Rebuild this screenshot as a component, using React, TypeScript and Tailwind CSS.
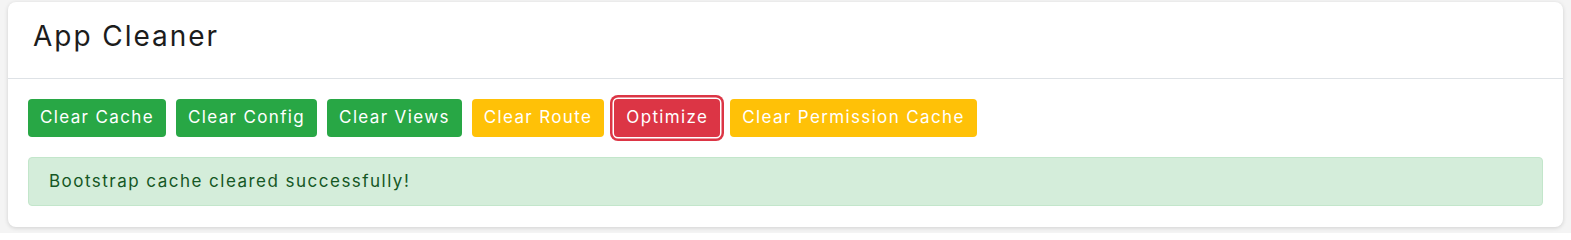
const buttons = [
  { label: "Clear Cache", tone: "green" },
  { label: "Clear Config", tone: "green" },
  { label: "Clear Views", tone: "green" },
  { label: "Clear Route", tone: "yellow" },
  { label: "Optimize", tone: "red" },
  { label: "Clear Permission Cache", tone: "yellow" },
];

const toneClass: Record<string, string> = {
  green: "bg-[#28a745]",
  yellow: "bg-[#ffc107]",
  red: "bg-[#dc3545] ring-[2.5px] ring-[#dc3545] ring-offset-[1.5px] ring-offset-white",
};

export default function App() {
  return (
    <div className="min-h-[233px] bg-[#f4f4f4] px-2 pt-[2px] pb-[6px] font-['Inter',sans-serif]">
      <div className="rounded-lg bg-white shadow-[0_1px_4px_rgba(0,0,0,0.15)]">
        <div className="h-[77px] border-b border-[#dee2e6] px-[25px] pt-[17px]">
          <h1 className="text-[28px] leading-[34px] font-normal tracking-[0.07em] text-[#1c1c1c]">App Cleaner</h1>
        </div>
        <div className="px-5 pt-5 pb-[21px]">
          <div className="flex gap-[10px]">
            {buttons.map((b) => (
              <button
                key={b.label}
                className={`h-[38px] rounded px-3 text-[17px] tracking-[0.08em] text-white ${toneClass[b.tone]}`}
              >
                {b.label}
              </button>
            ))}
          </div>
          <div className="mt-5 flex h-[49px] items-center rounded border border-[#c3e6cb] bg-[#d4edda] px-[20px] text-[17px] tracking-[0.087em] text-[#155724]">
            Bootstrap cache cleared successfully!
          </div>
        </div>
      </div>
    </div>
  );
}
